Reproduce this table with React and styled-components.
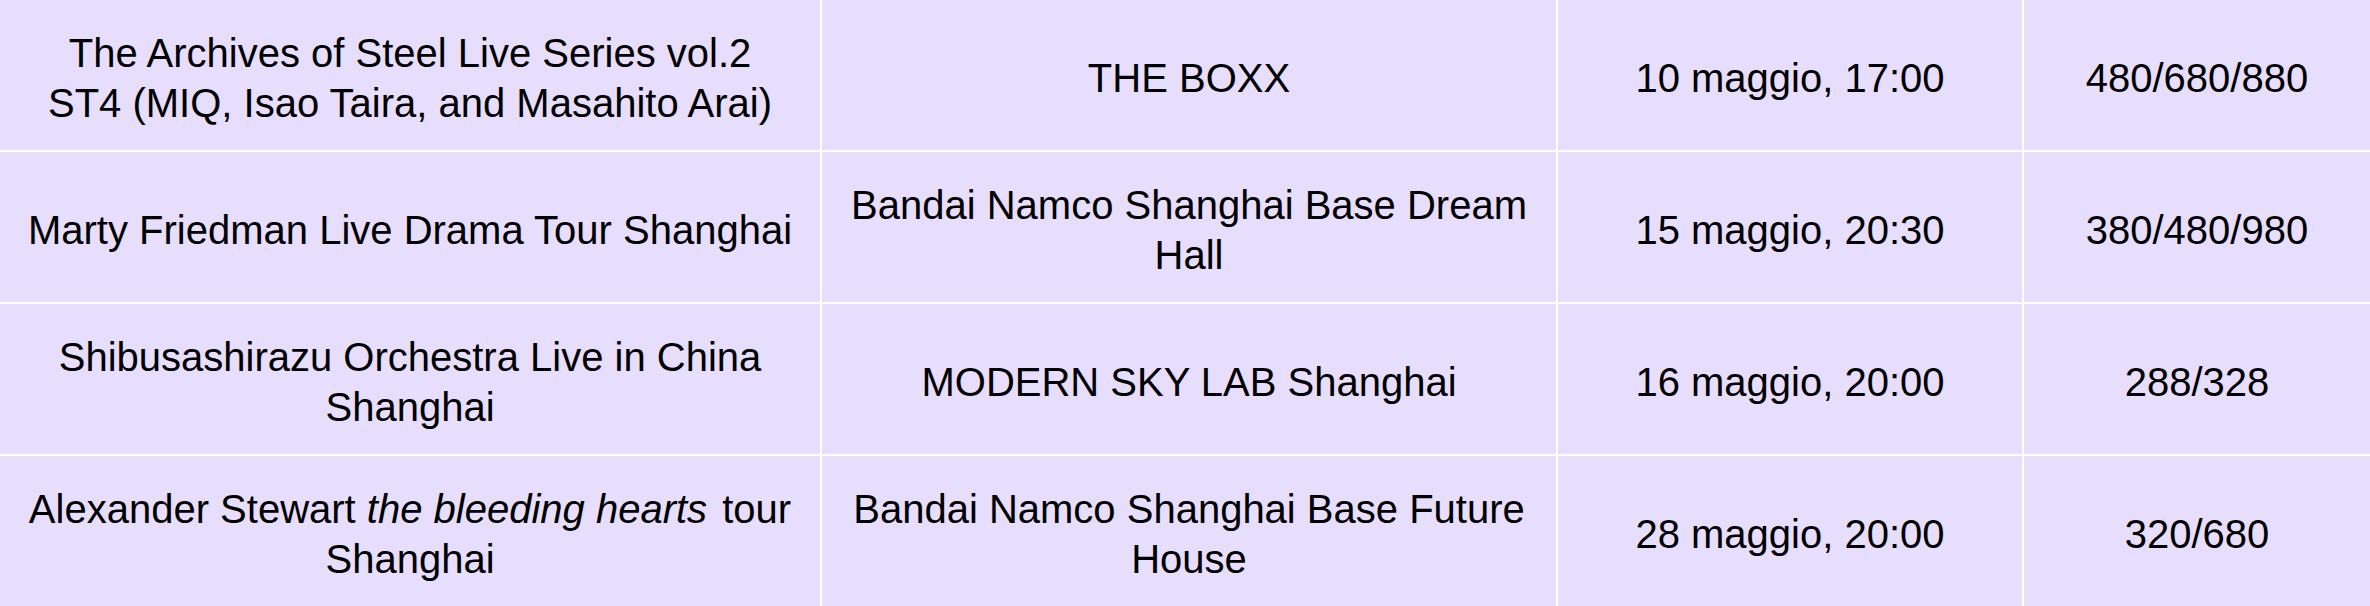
import React from "react";
import styled, { createGlobalStyle } from "styled-components";

const GlobalStyle = createGlobalStyle`
  html, body {
    margin: 0;
    padding: 0;
    background: #ffffff;
  }
  body {
    font-family: "Liberation Sans", Arial, Helvetica, sans-serif;
  }
`;

const Table = styled.div`
  display: grid;
  grid-template-columns: 820px 734px 464px 1fr;
  grid-auto-rows: 150px;
  gap: 2px;
  width: 2370px;
  background: #ffffff;
`;

const Cell = styled.div`
  display: flex;
  align-items: center;
  justify-content: center;
  padding: 6px 20px 0;
  background: #e7ddfc;
  color: #000000;
  font-family: "Liberation Sans", Arial, Helvetica, sans-serif;
  font-size: 40px;
  line-height: 50px;
  text-align: center;
`;

const Italic = styled.em`
  font-style: italic;
  padding-right: 4px;
`;

const rows = [
  {
    title: (
      <>
        The Archives of Steel Live Series vol.2
        <br />
        ST4 (MIQ, Isao Taira, and Masahito Arai)
      </>
    ),
    venue: "THE BOXX",
    date: "10 maggio, 17:00",
    price: "480/680/880",
  },
  {
    title: "Marty Friedman Live Drama Tour Shanghai",
    venue: "Bandai Namco Shanghai Base Dream Hall",
    date: "15 maggio, 20:30",
    price: "380/480/980",
  },
  {
    title: "Shibusashirazu Orchestra Live in China Shanghai",
    venue: "MODERN SKY LAB Shanghai",
    date: "16 maggio, 20:00",
    price: "288/328",
  },
  {
    title: (
      <>
        Alexander Stewart <Italic>the bleeding hearts</Italic> tour Shanghai
      </>
    ),
    venue: "Bandai Namco Shanghai Base Future House",
    date: "28 maggio, 20:00",
    price: "320/680",
  },
];

export default function App() {
  return (
    <>
      <GlobalStyle />
      <Table>
        {rows.map((r, i) => (
          <React.Fragment key={i}>
            <Cell>
              <span>{r.title}</span>
            </Cell>
            <Cell>
              <span>{r.venue}</span>
            </Cell>
            <Cell>
              <span>{r.date}</span>
            </Cell>
            <Cell>
              <span>{r.price}</span>
            </Cell>
          </React.Fragment>
        ))}
      </Table>
    </>
  );
}
